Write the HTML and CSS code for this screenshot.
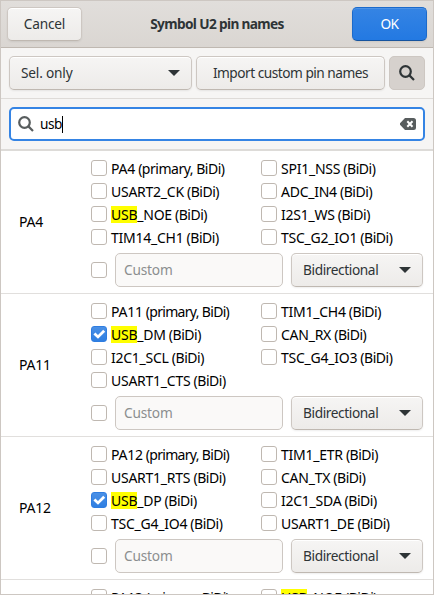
FILE: index.html
```html
<!DOCTYPE html>
<html lang="en">
<head>
<meta charset="utf-8">
<title>Symbol U2 pin names</title>
<link rel="stylesheet" href="styles.css">
</head>
<body>
<div class="window">
  <header class="header">
    <button class="btn cancel">Cancel</button>
    <h1 class="title">Symbol U2 pin names</h1>
    <button class="btn ok">OK</button>
  </header>
  <div class="toolbar">
    <button class="btn combo mode"><span>Sel. only</span><i class="arrow"></i></button>
    <button class="btn import">Import custom pin names</button>
    <button class="btn toggle" aria-label="Search"><svg width="16" height="16" viewBox="0 0 16 16"><circle cx="6.5" cy="6.5" r="5.3"/><path d="M10.4 10.4 15 15"/></svg></button>
  </div>
  <div class="searchbar">
    <div class="search">
      <svg class="glass" width="16" height="16" viewBox="0 0 16 16"><circle cx="6.5" cy="6.5" r="5.3"/><path d="M10.4 10.4 15 15"/></svg>
      <span class="query">usb</span><i class="caret"></i>
      <svg class="clear" width="16" height="12" viewBox="0 0 16 12"><path class="tag" d="M5 0h8.5A2.5 2.5 0 0 1 16 2.5v7a2.5 2.5 0 0 1-2.5 2.5H5L0 6.8V5.2z"/><path class="cross" d="m7.3 3.3 5.2 5.4m0-5.4L7.3 8.7"/></svg>
    </div>
  </div>
  <main class="list" id="list"></main>
</div>
<script src="app.js"></script>
</body>
</html>
```
FILE: styles.css
```css
* { box-sizing: border-box; }
body {
  margin: 0;
  font: 13.7px/18px "Noto Sans", sans-serif;
  letter-spacing: -.2px;
  color: #000;
}
.window {
  width: 434px;
  height: 595px;
  border: 1px solid #cdc7c2;
  background: #f6f5f4;
  display: flex;
  flex-direction: column;
  overflow: hidden;
}
.header {
  flex: none;
  height: 47px;
  padding: 0 6px;
  display: flex;
  align-items: center;
  justify-content: space-between;
  background: linear-gradient(#e1dedb, #dad6d2);
  border-bottom: 1px solid #bfb8b1;
}
.title {
  margin: 0;
  font-size: 13.7px;
  font-weight: 700;
  letter-spacing: -.65px;
  color: #2e3436;
}
.btn {
  height: 34px;
  padding: 0;
  display: flex;
  align-items: center;
  justify-content: center;
  font: inherit;
  letter-spacing: inherit;
  color: #2e3436;
  white-space: nowrap;
  border: 1px solid #cdc7c2;
  border-bottom-color: #bfb8b1;
  border-radius: 5px;
  background: linear-gradient(#f6f5f4, #edebe9);
  box-shadow: inset 0 1px #fff, 0 1px 2px rgba(0, 0, 0, .07);
}
.cancel { width: 75px; }
.ok {
  width: 75px;
  letter-spacing: -.5px;
  color: #fff;
  border-color: #1b6acb;
  border-bottom-color: #15539e;
  background: linear-gradient(#3584e4, #2379e2);
  box-shadow: inset 0 1px rgba(255, 255, 255, .12), 0 1px 2px rgba(0, 0, 0, .07);
}
.toolbar {
  flex: none;
  height: 51px;
  padding: 8px 8px 0;
  display: flex;
  gap: 4px;
  border-bottom: 1px solid #dedbd8;
}
.combo { justify-content: space-between; padding: 0 11px; }
.mode { width: 183px; }
.import { width: 189px; letter-spacing: -.5px; }
.arrow {
  border: solid transparent;
  border-width: 6px 6px 0;
  border-top-color: #2e3436;
}
.toggle {
  width: 36px;
  background: #d6d1cd;
  border-color: #cdc7c2;
  box-shadow: none;
}
svg { display: block; fill: none; stroke: #2e3436; stroke-width: 2.2; }
.searchbar {
  flex: none;
  height: 52px;
  padding: 8px 8px 0;
  border-bottom: 2px solid #dddbd8;
}
.search {
  height: 34px;
  padding: 0 7px;
  display: flex;
  align-items: center;
  background: #fff;
  border: 2px solid #3584e4;
  border-radius: 5px;
}
.glass { stroke: #585d5e; }
.query { margin-left: 6px; letter-spacing: -.5px; }
.caret { width: 1px; height: 17px; background: #000; }
.clear { margin-left: auto; }
.tag { fill: #585d5e; stroke: none; }
.cross { stroke: #fff; stroke-width: 2; }
.list { flex: 1; min-height: 0; overflow: hidden; background: #fff; }
.row {
  height: 143px;
  padding: 5px 10px 0 18px;
  display: grid;
  grid-template-columns: 72px 332px;
  border-bottom: 1px solid #e1dfdd;
}
.pin { align-self: center; padding-bottom: 5px; }
.options {
  display: grid;
  grid-template-columns: 170px 162px;
  grid-template-rows: repeat(4, 23px);
}
.option { display: flex; align-items: center; gap: 4px; padding-top: 1px; white-space: nowrap; }
.check {
  flex: none;
  width: 16px;
  height: 16px;
  border: 1px solid #bfb8b1;
  border-radius: 3px;
  background: #fff;
}
.checked { border-color: #2f7de0; background: linear-gradient(#4a90e6, #2f7fe2); }
.checked svg { stroke: #fff; stroke-width: 2.8; }
.label, .pin { font-size: 14px; letter-spacing: -.25px; }
.label { padding-top: 2px; }
.kind { letter-spacing: -.48px; }
.primary { letter-spacing: -.68px; }
mark {
  display: inline-block;
  line-height: 17px;
  background: #ff0;
  color: inherit;
}
.custom { margin-top: 5px; display: flex; align-items: center; }
.entry {
  width: 168px;
  height: 34px;
  margin: 0 8px;
  padding: 0 8px 1px;
  font: inherit;
  letter-spacing: inherit;
  color: #8b8e8f;
  border: 1px solid #cdc7c2;
  border-radius: 5px;
  background: #faf9f8;
}
.entry::placeholder { color: #8b8e8f; opacity: 1; }
.direction { width: 132px; letter-spacing: -.4px; }
```
FILE: app.js
```js
const pins = [
  ["PA4", [["PA4 (primary, BiDi)", "USART2_CK (BiDi)", "USB_NOE (BiDi)", "TIM14_CH1 (BiDi)"],
           ["SPI1_NSS (BiDi)", "ADC_IN4 (BiDi)", "I2S1_WS (BiDi)", "TSC_G2_IO1 (BiDi)"]]],
  ["PA11", [["PA11 (primary, BiDi)", "*USB_DM (BiDi)", "I2C1_SCL (BiDi)", "USART1_CTS (BiDi)"],
            ["TIM1_CH4 (BiDi)", "CAN_RX (BiDi)", "TSC_G4_IO3 (BiDi)"]]],
  ["PA12", [["PA12 (primary, BiDi)", "USART1_RTS (BiDi)", "*USB_DP (BiDi)", "TSC_G4_IO4 (BiDi)"],
            ["TIM1_ETR (BiDi)", "CAN_TX (BiDi)", "I2C1_SDA (BiDi)", "USART1_DE (BiDi)"]]],
  ["", [["PA13 (primary, BiDi)"], ["USB_NOE (BiDi)"]]]
];

const tick = '<svg width="14" height="14" viewBox="0 0 14 14"><path d="m2.4 6.4 3.6 3.5 6.2-6.2"/></svg>';

function option(name) {
  if (!name) return "<span></span>";
  const on = name[0] === "*";
  const kind = /PA1.*primary/.test(name) ? "kind primary" : "kind";
  const text = name
    .replace("*", "")
    .replace("USB", "<mark>USB</mark>")
    .replace(/ \(.*$/, `<span class="${kind}">$&</span>`);
  return `<label class="option"><i class="check${on ? " checked" : ""}">${on ? tick : ""}</i><span class="label">${text}</span></label>`;
}

document.getElementById("list").innerHTML = pins.map(([pin, [left, right]]) => `
  <section class="row">
    <div class="pin">${pin}</div>
    <div>
      <div class="options">${left.map((name, i) => option(name) + option(right[i])).join("")}</div>
      <div class="custom">
        <i class="check"></i><input class="entry" placeholder="Custom">
        <button class="btn combo direction"><span>Bidirectional</span><i class="arrow"></i></button>
      </div>
    </div>
  </section>`).join("");
```
